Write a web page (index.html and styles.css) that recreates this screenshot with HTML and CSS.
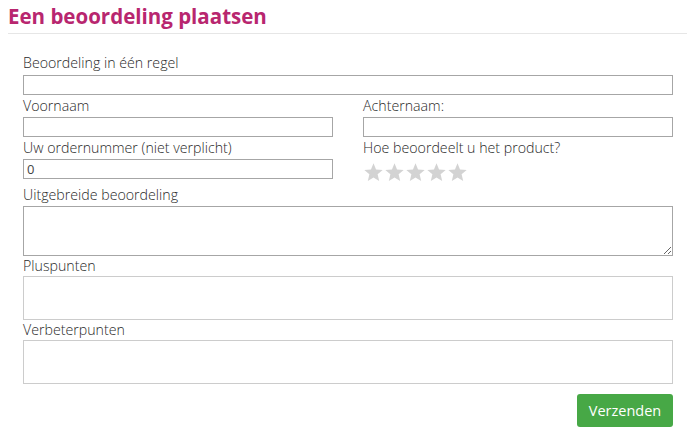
FILE: index.html
```html
<!DOCTYPE html>
<html lang="nl">
<head>
<meta charset="utf-8">
<title>Een beoordeling plaatsen</title>
<link rel="stylesheet" href="styles.css">
</head>
<body>
<h1 class="title">Een beoordeling plaatsen</h1>
<form class="review-form">
  <label class="lbl first">Beoordeling in één regel</label>
  <input class="field" type="text">
  <div class="cols">
    <div class="col">
      <label class="lbl">Voornaam</label>
      <input class="field" type="text">
      <label class="lbl">Uw ordernummer (niet verplicht)</label>
      <input class="field" type="text" value="0">
    </div>
    <div class="col">
      <label class="lbl">Achternaam:</label>
      <input class="field" type="text">
      <label class="lbl">Hoe beoordeelt u het product?</label>
      <div class="stars">
        <svg class="star" viewBox="0 0 24 24"><polygon points="12,1.5 14.9,8.6 22.5,9.2 16.7,14.1 18.5,21.6 12,17.6 5.5,21.6 7.3,14.1 1.5,9.2 9.1,8.6"/></svg>
        <svg class="star" viewBox="0 0 24 24"><polygon points="12,1.5 14.9,8.6 22.5,9.2 16.7,14.1 18.5,21.6 12,17.6 5.5,21.6 7.3,14.1 1.5,9.2 9.1,8.6"/></svg>
        <svg class="star" viewBox="0 0 24 24"><polygon points="12,1.5 14.9,8.6 22.5,9.2 16.7,14.1 18.5,21.6 12,17.6 5.5,21.6 7.3,14.1 1.5,9.2 9.1,8.6"/></svg>
        <svg class="star" viewBox="0 0 24 24"><polygon points="12,1.5 14.9,8.6 22.5,9.2 16.7,14.1 18.5,21.6 12,17.6 5.5,21.6 7.3,14.1 1.5,9.2 9.1,8.6"/></svg>
        <svg class="star" viewBox="0 0 24 24"><polygon points="12,1.5 14.9,8.6 22.5,9.2 16.7,14.1 18.5,21.6 12,17.6 5.5,21.6 7.3,14.1 1.5,9.2 9.1,8.6"/></svg>
      </div>
    </div>
  </div>
  <label class="lbl">Uitgebreide beoordeling</label>
  <textarea class="area"></textarea>
  <label class="lbl short">Pluspunten</label>
  <div class="box" contenteditable="true"></div>
  <label class="lbl short">Verbeterpunten</label>
  <div class="box" contenteditable="true"></div>
  <div class="actions">
    <button class="submit" type="button">Verzenden</button>
  </div>
</form>
</body>
</html>
```

FILE: styles.css
```css
html, body {
  margin: 0;
  padding: 0;
  background: #fff;
}
body {
  font-family: "Open Sans", "Lato", sans-serif;
  color: #333;
}
.title {
  margin: 0 0 0 8px;
  padding: 4px 0 0 0;
  height: 34px;
  box-sizing: border-box;
  border-bottom: 1px solid #e6e6e6;
  font-size: 20.5px;
  line-height: 24px;
  font-weight: 700;
  color: #b8266f;
}
.review-form {
  display: flex;
  flex-direction: column;
  width: 650px;
  margin: 0 0 0 23px;
  padding-top: 18px;
}
.lbl {
  display: block;
  height: 22px;
  line-height: 22px;
  font-size: 14.2px;
  font-weight: 300;
  color: #2a2a2a;
}
.lbl.first {
  height: 23px;
}
.lbl.short {
  height: 20px;
  line-height: 20px;
}
.field {
  display: block;
  box-sizing: border-box;
  width: 100%;
  height: 20px;
  margin: 0;
  padding: 0 3px;
  border: 1px solid #a6a6a6;
  font-family: inherit;
  font-size: 13px;
  font-weight: 400;
  color: #444;
  outline: none;
}
.cols {
  display: grid;
  grid-template-columns: 310px 310px;
  column-gap: 30px;
}
.col {
  display: flex;
  flex-direction: column;
}
.stars {
  display: flex;
  height: 25px;
  padding-top: 3px;
  box-sizing: border-box;
}
.star {
  width: 21px;
  height: 21px;
  fill: #d3d3d3;
}
.area {
  display: block;
  box-sizing: border-box;
  width: 100%;
  height: 50px;
  margin: 0;
  border: 1px solid #a6a6a6;
  resize: vertical;
  font-family: inherit;
  outline: none;
}
.box {
  box-sizing: border-box;
  width: 100%;
  height: 44px;
  border: 1px solid #cccccc;
  outline: none;
}
.actions {
  display: flex;
  justify-content: flex-end;
  margin-top: 10px;
}
.submit {
  width: 96px;
  height: 33px;
  border: 0;
  border-radius: 3px;
  background: #47a846;
  color: #fff;
  font-family: inherit;
  font-size: 14.5px;
  padding: 0;
}
```
